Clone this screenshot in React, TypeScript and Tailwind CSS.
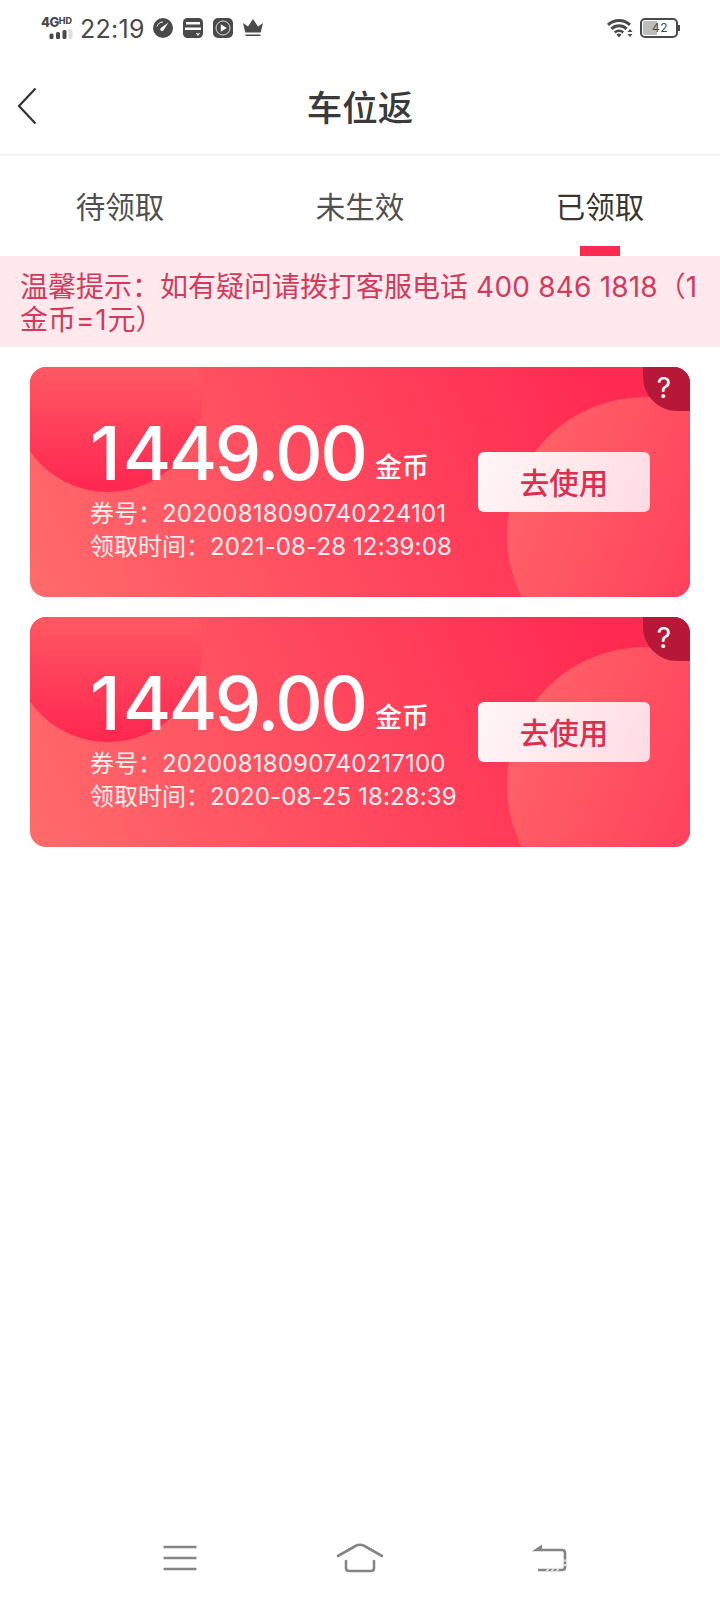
interface Coupon {
  id: string;
  amount: string;
  claimedAt: string;
}

const tabs = ['待领取', '未生效', '已领取'];

const coupons: Coupon[] = [
  { id: '20200818090740224101', amount: '1449.00', claimedAt: '2021-08-28 12:39:08' },
  { id: '20200818090740217100', amount: '1449.00', claimedAt: '2020-08-25 18:28:39' },
];

function StatusBar() {
  return (
    <div className="flex h-14 items-center justify-between pl-[41px] pr-10 text-[#4a4a4a]">
      <div className="flex items-center">
        <div className="flex w-8 flex-col">
          <div className="flex items-start text-[13px] font-extrabold leading-[11px]">
            <span className="tracking-[-0.5px]">4G</span>
            <span className="text-[9px] leading-[8px]">HD</span>
          </div>
          <svg className="ml-2 mt-[1px]" width="24" height="10" viewBox="0 0 24 10" fill="currentColor">
            <rect x="0.5" y="4.500" width="4" height="5.500" rx="1.5" />
            <rect x="7" y="3" width="4" height="7" rx="1.5" />
            <rect x="13.5" y="1" width="4" height="9" rx="1.5" />
            <rect x="19.5" y="0" width="4" height="10" rx="1.5" fill="#dedede" />
          </svg>
        </div>
        <span className="ml-[7px] w-[65px] whitespace-nowrap pt-px text-[25px] leading-7 tracking-[0.3px]">22:19</span>
        <div className="ml-2 flex items-center gap-[10px]">
          <svg width="20" height="20" viewBox="0 0 20 20">
            <circle cx="10" cy="10" r="10" fill="currentColor" />
            <path d="M15.500 4.500 8.500 9.500a1.800 1.800 0 1 0 2.300 2.300z" fill="#fff" />
            <path d="M4 8.500a6.500 6.500 0 0 1 6-4.500" stroke="#fff" strokeWidth="1" fill="none" />
          </svg>
          <svg width="20" height="20" viewBox="0 0 20 20">
            <rect width="20" height="20" rx="4.5" fill="currentColor" />
            <path d="M3 4h14v2.500H3zM2 9.500h16V12H2z" fill="#fff" />
            <path d="m13.500 15 1.500 2 1.500-2" stroke="#fff" strokeWidth="1.2" fill="none" />
          </svg>
          <svg width="20" height="20" viewBox="0 0 20 20">
            <rect width="20" height="20" rx="5" fill="currentColor" />
            <circle cx="10" cy="10" r="7" stroke="#ddd" strokeWidth="1" fill="none" />
            <path d="M7.800 6.300v7.400l6-3.700z" fill="#fff" />
          </svg>
          <svg width="20" height="20" viewBox="0 0 20 20" fill="currentColor">
            <path d="m0 5 5 3.500L10 1l5 7.500L20 5l-2.300 9.500H2.300zM2.500 16.500h15V18h-15z" />
          </svg>
        </div>
      </div>
      <div className="flex items-center gap-[7px]">
        <svg width="26" height="20" viewBox="0 0 26 20" fill="none" stroke="currentColor">
          <path d="M1 6.800a16 16 0 0 1 22 0" strokeWidth="3" />
          <path d="M4.400 10.800a11 11 0 0 1 15.200 0" strokeWidth="3" />
          <path d="M7.800 14.500a6 6 0 0 1 8.400 0" strokeWidth="2.600" />
          <path d="m9.500 16.500 2.500 3 2.500-3q-2.500-2-5 0z" fill="currentColor" stroke="none" />
          <path d="m23 11 2.500 3h-5zM23 19l2.500-3h-5z" fill="currentColor" stroke="none" />
        </svg>
        <div className="flex items-center">
          <div className="relative flex h-5 w-[38px] items-center justify-center rounded-[5px] border-2 border-[#4a4a4a]">
            <div className="absolute inset-y-[1px] left-[1px] w-[14px] rounded-l-[2px] bg-[#bdbdbd]" />
            <span className="relative pl-[2px] text-[12px] leading-none tracking-[0.5px]">42</span>
          </div>
          <div className="h-[6px] w-[2px] bg-[#4a4a4a]" />
        </div>
      </div>
    </div>
  );
}

function CouponCard({ coupon }: { coupon: Coupon }) {
  return (
    <div className="relative h-[230px] overflow-hidden rounded-2xl bg-[linear-gradient(66deg,#ff6b6b_0%,#ff2a52_87%)] text-white">
      <div className="absolute -left-[17px] -top-[65px] size-[190px] rounded-full bg-[linear-gradient(180deg,#ff5763_36%,#ff2650_100%)]" />
      <div className="absolute left-[477px] top-[30px] size-[276px] rounded-full bg-[linear-gradient(110deg,#ff5f67_15%,#ff3b59_80%)]" />
      <div className="absolute right-0 top-0 flex h-11 w-[47px] justify-center rounded-bl-[34px] bg-[#b81838]">
        <span className="mr-[5px] mt-[5px] text-[28px] leading-8">?</span>
      </div>

      <div className="relative flex h-full items-start justify-between pl-[60px] pr-10">
        <div className="pt-[46px]">
          <div className="flex h-[84px] leading-[80px]">
            <span className="w-[276px] whitespace-nowrap text-[74px] font-medium">
              <span className="tracking-[2px]">{coupon.amount.slice(0, 1)}</span>
              <span className="tracking-[-2.500px]">{coupon.amount.slice(1)}</span>
            </span>
            <span className="ml-[9px] mt-[15px] text-[27px] font-medium">金币</span>
          </div>
          <div className="whitespace-nowrap text-2xl leading-[33px] text-[#ffeef0]">
            <p>
              券号：<span className="tracking-[0.200px]">{coupon.id}</span>
            </p>
            <p>
              领取时间：<span className="tracking-[0.120px]">{coupon.claimedAt}</span>
            </p>
          </div>
        </div>
        <button className="mt-[85px] h-[60px] w-[172px] rounded-md bg-[linear-gradient(115deg,#fff7f8_0%,#ffdbe2_100%)] pt-[3px] text-[29.500px] font-medium text-[#dc2f50]">
          去使用
        </button>
      </div>
    </div>
  );
}

function NavigationBar() {
  return (
    <div className="mt-auto flex h-[84px] items-center pl-[163px] text-[#858585]">
      <svg width="34" height="28" viewBox="0 0 34 28" stroke="currentColor" strokeWidth="2.600">
        <path d="M.5 3h33M.5 14h33M.5 25h33" />
      </svg>
      <svg className="ml-[139px] mr-[148px]" width="48" height="32" viewBox="0 0 48 32" fill="none" stroke="currentColor" strokeWidth="2.600" strokeLinecap="round">
        <path d="m2 14 17.500-10q4.500-2.500 9 0L46 14" />
        <path d="M10 19v7q0 3 3 3h22q3 0 3-3v-7" />
      </svg>
      <svg width="36" height="30" viewBox="0 0 36 30" fill="none" stroke="currentColor" strokeWidth="2.600">
        <path d="M9 7h21q3 0 3 3v14q0 3-3 3H6" />
        <path d="M0 8.300 10 1.500v6.800z" fill="currentColor" stroke="none" />
        <path d="m14 29 3-4M19 29l3-4M24 29l3-4M31 17.500h4M31 22h4" stroke="#dedede" strokeWidth="2" />
      </svg>
    </div>
  );
}

export default function App() {
  return (
    <div className="flex min-h-[1600px] w-[720px] flex-col bg-white font-['Inter','Noto_Sans_CJK_SC',sans-serif]">
      <StatusBar />

      <header className="grid h-[100px] grid-cols-[1fr_auto_1fr] items-center border-b-2 border-[#f4f4f4] px-[17px]">
        <button className="text-[#333]">
          <svg width="20" height="38" viewBox="0 0 20 38" fill="none" stroke="currentColor" strokeWidth="2.200">
            <path d="M18.500 2.500 2 20l16.500 17.500" />
          </svg>
        </button>
        <h1 className="pt-[7px] text-[35.500px] font-medium text-[#3a3a3a]">车位返</h1>
      </header>

      <nav className="grid h-[100px] grid-cols-3">
        {tabs.map((tab) => (
          <button
            key={tab}
            className={
              tab === '已领取'
                ? 'relative pt-[2px] text-[29.500px] text-[#3b352f]'
                : 'relative pt-[2px] text-[29.500px] text-[#505050]'
            }
          >
            {tab}
            {tab === '已领取' && (
              <span className="absolute bottom-0 left-1/2 h-[10px] w-10 -translate-x-1/2 bg-[#fc2a50]" />
            )}
          </button>
        ))}
      </nav>

      <p className="h-[91px] whitespace-nowrap bg-[#ffe9ec] px-5 pt-[15px] text-[28px] leading-[33px] text-[#d33a5d]">
        温馨提示：如有疑问请拨打客服电话<span className="tracking-[0.200px]"> 400 846 1818</span>（1
        <br />
        金币<span className="tracking-[0.800px]">=1</span>元）
      </p>

      <main className="flex flex-col gap-5 px-[30px] pt-5">
        {coupons.map((coupon) => (
          <CouponCard key={coupon.id} coupon={coupon} />
        ))}
      </main>

      <NavigationBar />
    </div>
  );
}
